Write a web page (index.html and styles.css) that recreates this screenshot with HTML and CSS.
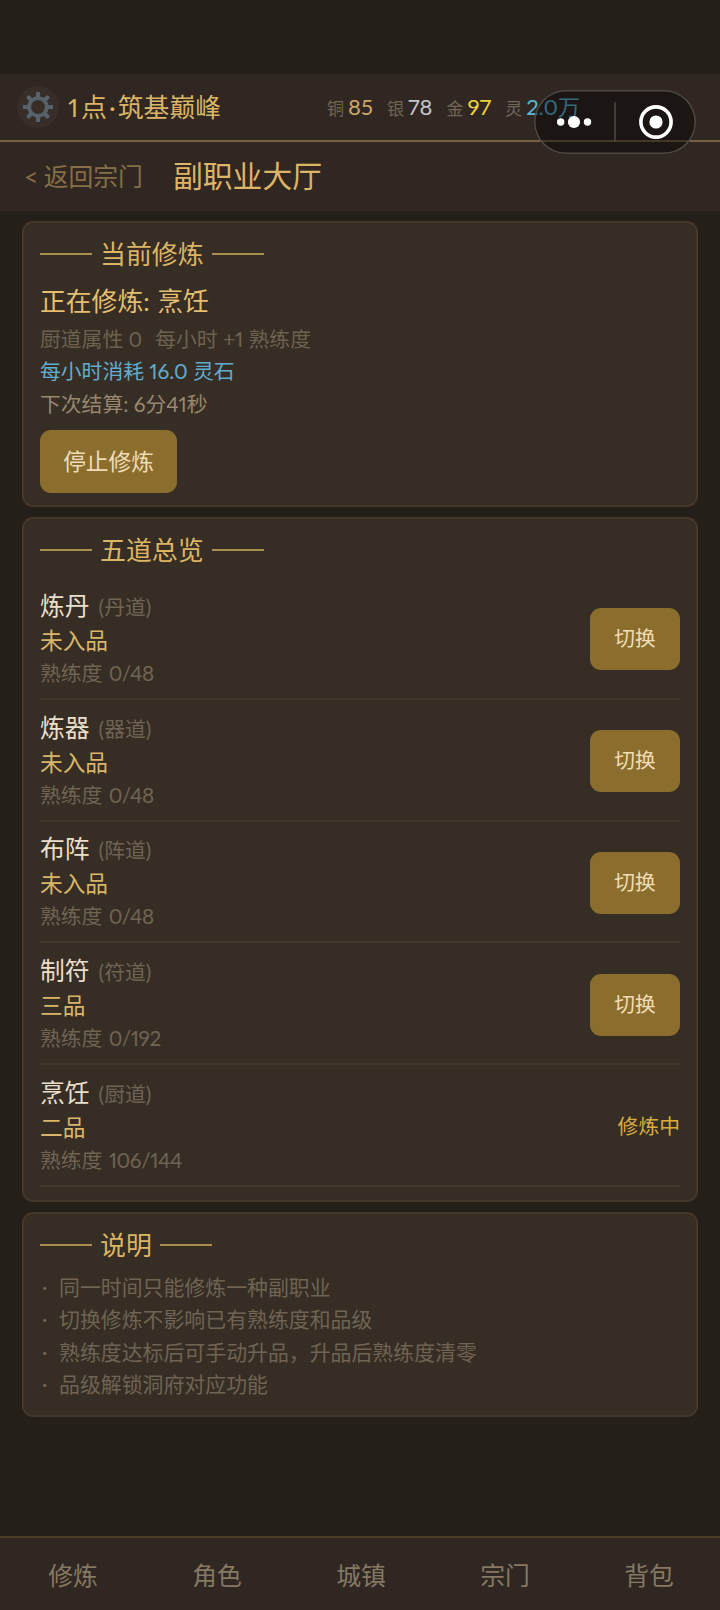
FILE: index.html
```
<!DOCTYPE html>
<html lang="zh-CN">
<head>
<meta charset="utf-8">
<title>副职业大厅</title>
<link rel="stylesheet" href="styles.css">
</head>
<body>
<div class="app">
  <header class="topbar">
    <div class="avatar">
      <svg width="32" height="32" viewBox="-16 -16 32 32" fill="none" stroke="#57626a">
        <circle r="8.8" stroke-width="3.8"/>
        <g stroke-width="4.2"><path d="M0-10V-15M0 10V15M-10 0H-15M10 0H15"/><path stroke-linecap="round" d="M7.4-7.4L9.4-9.4M7.4 7.4L9.4 9.4M-7.4-7.4L-9.4-9.4M-7.4 7.4L-9.4 9.4"/></g>
      </svg>
    </div>
    <div class="player"><span class="count">1</span>点<span class="sep">·</span>筑基巅峰</div>
    <div class="wallet">
      <span class="coin"><i>铜</i><b class="copper">85</b></span>
      <span class="coin"><i>银</i><b class="silver">78</b></span>
      <span class="coin"><i>金</i><b class="gold">97</b></span>
      <span class="coin"><i>灵</i><b class="spirit">2.0万</b></span>
    </div>
  </header>
  <div class="capsule">
    <svg width="162" height="64" viewBox="0 0 162 64">
      <g fill="#fff"><circle cx="26.7" cy="32" r="3.7"/><circle cx="40" cy="32" r="6.1"/><circle cx="53.5" cy="32" r="3.7"/><circle cx="122" cy="32" r="6.6"/></g>
      <circle cx="122" cy="32" r="15.1" fill="none" stroke="#fff" stroke-width="3.6"/>
      <path d="M81 12V52" stroke="#4b4643" stroke-width="1.6"/>
    </svg>
  </div>
  <div class="titlebar">
    <span class="back">&lt; 返回宗门</span>
    <h1>副职业大厅</h1>
  </div>
  <main>
    <section class="card current">
      <h2>当前修炼</h2>
      <p class="now">正在修炼: 烹饪</p>
      <p class="attr"><span>厨道属性 0</span><span>每小时 +1 熟练度</span></p>
      <p class="cost">每小时消耗 16.0 灵石</p>
      <p class="next">下次结算: 6分41秒</p>
      <button class="btn stop">停止修炼</button>
    </section>
    <section class="card overview">
      <h2>五道总览</h2>
      <div class="row"><div><p class="name">炼丹<small>(丹道)</small></p><p class="rank">未入品</p><p class="skill">熟练度 <span>0/48</span></p></div><button class="btn">切换</button></div>
      <div class="row"><div><p class="name">炼器<small>(器道)</small></p><p class="rank">未入品</p><p class="skill">熟练度 <span>0/48</span></p></div><button class="btn">切换</button></div>
      <div class="row"><div><p class="name">布阵<small>(阵道)</small></p><p class="rank">未入品</p><p class="skill">熟练度 <span>0/48</span></p></div><button class="btn">切换</button></div>
      <div class="row"><div><p class="name">制符<small>(符道)</small></p><p class="rank">三品</p><p class="skill">熟练度 <span>0/192</span></p></div><button class="btn">切换</button></div>
      <div class="row"><div><p class="name">烹饪<small>(厨道)</small></p><p class="rank">二品</p><p class="skill">熟练度 <span>106/144</span></p></div><span class="active">修炼中</span></div>
    </section>
    <section class="card notes">
      <h2>说明</h2>
      <ul>
        <li>同一时间只能修炼一种副职业</li>
        <li>切换修炼不影响已有熟练度和品级</li>
        <li>熟练度达标后可手动升品，升品后熟练度清零</li>
        <li>品级解锁洞府对应功能</li>
      </ul>
    </section>
  </main>
  <nav><span>修炼</span><span>角色</span><span>城镇</span><span>宗门</span><span>背包</span></nav>
</div>
</body>
</html>
```
FILE: styles.css
```
* { box-sizing: border-box; margin: 0; padding: 0; }
body {
  width: 720px; height: 1610px; overflow: hidden;
  background: #251f1a;
  font-family: Lato, "Noto Sans CJK SC", sans-serif;
  font-weight: 400;
  font-variant-numeric: proportional-nums;
  word-spacing: 1px;
}
h1, h2, b, i { font-weight: inherit; font-style: normal; }
.app { position: relative; height: 1610px; padding-top: 74px; display: flex; flex-direction: column; }
.topbar {
  height: 68px; padding-left: 17px; display: flex; align-items: center;
  background: #302722; border-bottom: 2px solid #796242;
}
.avatar { width: 42px; height: 42px; border-radius: 50%; background: #372d29; display: flex; align-items: center; justify-content: center; }
.player { margin-left: 9px; width: 251px; font-size: 25.8px; line-height: 34px; color: #d9b565; white-space: nowrap; }
.count { display: inline-block; width: 13px; }
.sep { display: inline-block; width: 11px; text-align: center; }
.wallet { margin-left: 8px; display: flex; gap: 14px; white-space: nowrap; }
.coin { display: flex; align-items: baseline; }
.coin i { font-size: 17px; color: #706657; margin-right: 4px; }
.coin b { font-size: 22px; line-height: 30px; }
.copper { color: #cba668; }
.silver { color: #c6c5cb; }
.gold { color: #f2d33e; }
.spirit { color: #5bb5d8; }
.capsule {
  position: absolute; left: 534px; top: 90px; width: 162px; height: 64px;
  border-radius: 32px; background: rgba(0, 0, 0, .43); box-shadow: inset 0 0 0 1.5px #4f4945;
}
.capsule svg { display: block; }
.titlebar { height: 69px; padding-left: 24px; display: flex; align-items: center; background: #302722; }
.back { width: 149px; font-size: 24.8px; line-height: 34px; color: #846f47; white-space: nowrap; word-spacing: -1px; }
h1 { font-size: 29.8px; line-height: 40px; padding-bottom: 2px; color: #deb567; }
main { padding: 10px 22px 0; display: flex; flex-direction: column; gap: 10px; }
.card { border: 2px solid #42372a; border-radius: 11px; background: #362d25; padding: 0 16px; }
.current { height: 286px; }
.overview { height: 685px; }
.notes { height: 205px; }
h2 {
  display: flex; align-items: center; height: 34px; margin-top: 14px;
  font-size: 25.9px; line-height: 34px; color: #dcb564;
}
h2::before, h2::after { content: ""; width: 52px; height: 2px; background: #aa8b50; }
h2::before { margin-right: 8px; }
h2::after { margin-left: 8px; }
.now { margin-top: 12px; font-size: 25.8px; line-height: 36px; color: #e4bf70; }
.attr, .cost, .next { font-size: 20.8px; line-height: 32px; }
.attr { margin-top: 4px; color: #6d6250; display: flex; gap: 13px; word-spacing: 0; }
.cost { color: #62acd0; word-spacing: 0; }
.next { color: #97886f; margin-top: 1px; word-spacing: 0; }
.btn {
  flex: none; border: 0; border-radius: 11px; background: #8b6e2d; color: #f0ddb7;
  width: 90px; height: 62px; padding-bottom: 1px; font: 400 20.7px/61px Lato, "Noto Sans CJK SC", sans-serif;
}
.stop { display: block; width: 137px; height: 63px; margin-top: 10px; font-size: 22.7px; }
.overview h2 { margin-bottom: 11px; }
.row {
  height: 121.75px; padding-top: 3px; display: flex; align-items: center; justify-content: space-between;
  border-bottom: 2px solid #42372a;
}
.name { font-size: 24.8px; line-height: 34px; color: #e9dfca; }
.name small { margin-left: 9px; font-size: 20.8px; color: #6f6453; }
.rank { font-size: 22.7px; line-height: 33px; color: #d9b569; }
.skill { font-size: 20.8px; line-height: 32px; padding-bottom: 1px; color: #6f6453; }
.skill span { letter-spacing: -.4px; }
.active { font-size: 20.8px; color: #d9ad40; padding-bottom: 2px; }
ul { list-style: none; margin-top: 9px; }
li { display: flex; font-size: 20.9px; line-height: 32.4px; color: #6f6453; }
li::before { content: "·"; width: 17px; padding-left: 2px; }
nav {
  margin-top: auto; height: 74px; display: grid; grid-template-columns: repeat(5, 144px);
  align-items: center; justify-items: center; background: #302722; border-top: 2px solid #4b3e28;
  font-size: 24.8px; line-height: 34px; color: #857963;
}
nav span { padding: 4px 0 0 2px; }
```
